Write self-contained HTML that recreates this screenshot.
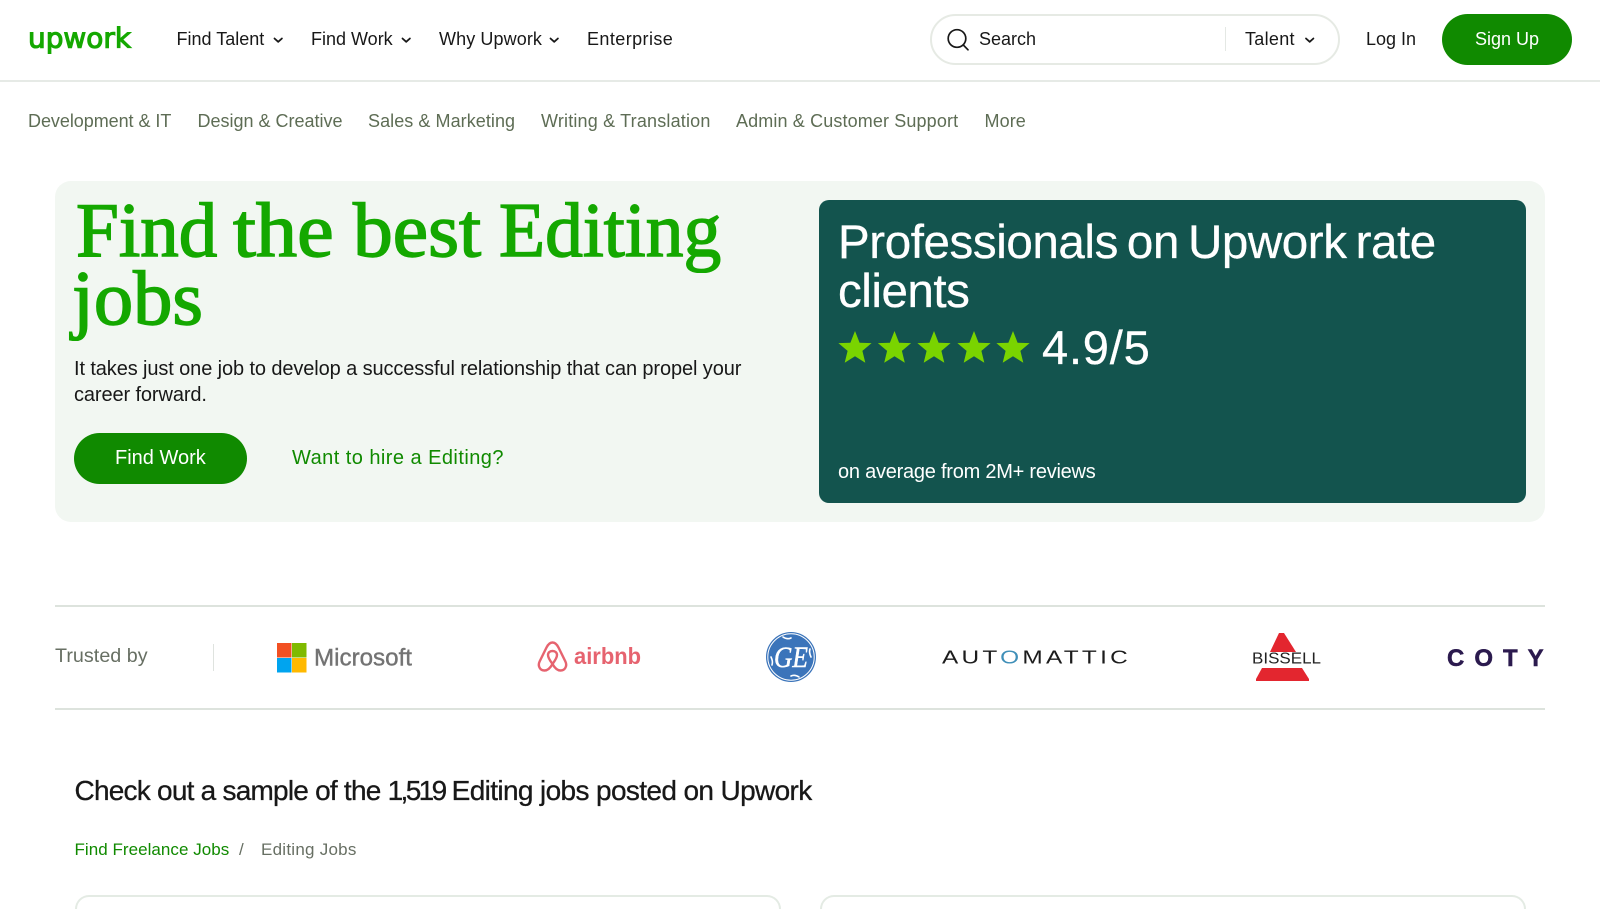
<!DOCTYPE html>
<html lang="en">
<head>
<meta charset="utf-8">
<title>Find the best Editing jobs - Upwork</title>
<style>
html,body{margin:0;padding:0;background:#fff;width:1600px;height:909px;overflow:hidden;}
#p{position:relative;width:1600px;height:909px;overflow:hidden;font-family:"Liberation Sans",sans-serif;color:#181818;background:#fff;}
.t{position:absolute;white-space:nowrap;line-height:1.117;}
.b{position:absolute;box-sizing:border-box;}
.nav{font-size:18px;top:29px;}
.sub{font-size:18px;top:111px;color:#5e6d55;}
.h{position:absolute;white-space:nowrap;line-height:1.117;top:187px;font-family:"Liberation Serif",serif;font-size:77px;color:#14a800;-webkit-text-stroke:1.5px #14a800;transform-origin:0 50%;}
</style>
</head>
<body>
<div id="p">
<div class="b" style="left:0;top:80px;width:1600px;height:1.5px;background:#e6eae6"></div>

<span class="t nav" style="left:176.5px">Find Talent</span>
<span class="t nav" style="left:311px">Find Work</span>
<span class="t nav" style="left:439px;letter-spacing:.1px">Why Upwork</span>
<span class="t nav" style="left:587px;letter-spacing:.42px">Enterprise</span>

<div class="b" style="left:930px;top:14px;width:410px;height:51px;border:2px solid #e6eae4;border-radius:26px;background:#fff"></div>
<div class="b" style="left:1225px;top:27px;width:1px;height:24px;background:#e4e8e4"></div>
<span class="t nav" style="left:979px">Search</span>
<span class="t nav" style="left:1245px;letter-spacing:.3px">Talent</span>
<span class="t nav" style="left:1366px">Log In</span>
<div class="b" style="left:1442px;top:14px;width:130px;height:51px;border-radius:26px;background:#108a00"></div>
<span class="t nav" style="left:1475px;color:#fff">Sign Up</span>

<span class="t sub" style="left:28px;letter-spacing:-.05px">Development &amp; IT</span>
<span class="t sub" style="left:197.5px">Design &amp; Creative</span>
<span class="t sub" style="left:368px;letter-spacing:.06px">Sales &amp; Marketing</span>
<span class="t sub" style="left:541px;letter-spacing:.18px">Writing &amp; Translation</span>
<span class="t sub" style="left:736px;letter-spacing:.13px">Admin &amp; Customer Support</span>
<span class="t sub" style="left:984.5px;letter-spacing:.1px">More</span>

<div class="b" style="left:55px;top:181px;width:1490px;height:341px;border-radius:16px;background:#f2f7f2"></div>
<span class="h" style="left:76px">Find</span>
<span class="h" style="left:233.4px;transform:scaleX(1.07)">the</span>
<span class="h" style="left:352.9px;transform:scaleX(1.033)">best</span>
<span class="h" style="left:499.3px;transform:scaleX(.98)">Editing</span>
<span class="h" style="left:71.5px;top:255px;transform:scaleX(1.02)">jobs</span>
<span class="t" style="left:74px;top:358px;font-size:20px;letter-spacing:-.11px">It takes just one job to develop a successful relationship that can propel your</span>
<span class="t" style="left:74px;top:384px;font-size:20px;letter-spacing:-.11px">career forward.</span>
<div class="b" style="left:74px;top:433px;width:173px;height:51px;border-radius:26px;background:#108a00"></div>
<span class="t" style="left:115px;top:447px;font-size:20px;color:#fff">Find Work</span>
<span class="t" style="left:292px;top:447px;font-size:20px;letter-spacing:.45px;color:#108a00">Want to hire a Editing?</span>

<div class="b" style="left:819px;top:200px;width:707px;height:303px;border-radius:10px;background:#13544e"></div>
<span class="t" style="left:838px;top:215.5px;font-size:47.5px;letter-spacing:-.4px;word-spacing:-3.8px;color:#fff;-webkit-text-stroke:.3px #fff">Professionals on Upwork rate</span>
<span class="t" style="left:838px;top:264.5px;font-size:47.5px;letter-spacing:-.47px;color:#fff;-webkit-text-stroke:.3px #fff">clients</span>
<span class="t" style="left:1042px;top:321.5px;font-size:47px;letter-spacing:.8px;color:#fff;-webkit-text-stroke:.3px #fff">4.9/5</span>
<span class="t" style="left:838px;top:461px;font-size:20px;letter-spacing:-.24px;color:#fff">on average from 2M+ reviews</span>

<div class="b" style="left:55px;top:605px;width:1490px;height:1.5px;background:#dde3dd"></div>
<div class="b" style="left:55px;top:708px;width:1490px;height:1.5px;background:#dde3dd"></div>
<span class="t" style="left:55px;top:645px;font-size:19.7px;letter-spacing:.04px;color:#676f63">Trusted by</span>
<div class="b" style="left:212.5px;top:644px;width:1px;height:27px;background:#dfe3df"></div>

<span class="t" style="left:74.5px;top:774.7px;font-size:28px;letter-spacing:-.77px;-webkit-text-stroke:.3px #181818">Check out a sample of the <span style="letter-spacing:-2.6px">1,519</span> <span style="letter-spacing:-.63px">Editing jobs posted on Upwork</span></span>
<span class="t" style="left:74.5px;top:839.6px;font-size:17px;letter-spacing:.04px;color:#108a00">Find Freelance Jobs</span>
<span class="t" style="left:239px;top:839.6px;font-size:17px;color:#676f63">/</span>
<span class="t" style="left:261px;top:839.6px;font-size:17px;letter-spacing:.25px;color:#676f63">Editing Jobs</span>

<div class="b" style="left:75px;top:895px;width:706px;height:14px;border:2px solid #e4ebe4;border-bottom:0;border-radius:18px 18px 0 0"></div>
<div class="b" style="left:820px;top:895px;width:706px;height:14px;border:2px solid #e4ebe4;border-bottom:0;border-radius:18px 18px 0 0"></div>

<svg width="1600" height="909" viewBox="0 0 1600 909" style="position:absolute;left:0;top:0;display:block" xmlns="http://www.w3.org/2000/svg">
  <defs>
    <clipPath id="c"><rect x="1400" y="630" width="145" height="60"/></clipPath>
  </defs>
  <!-- Logo -->
  <text x="28" y="47.5" font-family="'DejaVu Sans',sans-serif" font-size="27.5" fill="#14a800" stroke="#14a800" stroke-width="1.1" textLength="103" lengthAdjust="spacingAndGlyphs">upwork</text>

  <!-- Chevrons -->
  <g fill="none" stroke="#181818" stroke-width="1.8" stroke-linecap="round" stroke-linejoin="round">
    <path d="M274.5 38.5l3.7 3.3 3.7-3.3"/>
    <path d="M402.5 38.5l3.7 3.3 3.7-3.3"/>
    <path d="M550.5 38.5l3.7 3.3 3.7-3.3"/>
    <path d="M1306 38.5l3.7 3.3 3.7-3.3"/>
  </g>
  <!-- Search icon -->
  <g fill="none" stroke="#181818" stroke-width="1.7" stroke-linecap="round">
    <circle cx="957" cy="38.5" r="8.8"/>
    <path d="M963.3 45l4.7 4.8"/>
  </g>

  <!-- Stars -->
  <g fill="#7ad400">
    <polygon transform="translate(855 348.5)" points="0,-17.5 4.6,-5.8 16.6,-5.4 7.4,2.4 10.3,14.2 0,7.8 -10.3,14.2 -7.4,2.4 -16.6,-5.4 -4.6,-5.8"/>
    <polygon transform="translate(894.5 348.5)" points="0,-17.5 4.6,-5.8 16.6,-5.4 7.4,2.4 10.3,14.2 0,7.8 -10.3,14.2 -7.4,2.4 -16.6,-5.4 -4.6,-5.8"/>
    <polygon transform="translate(934 348.5)" points="0,-17.5 4.6,-5.8 16.6,-5.4 7.4,2.4 10.3,14.2 0,7.8 -10.3,14.2 -7.4,2.4 -16.6,-5.4 -4.6,-5.8"/>
    <polygon transform="translate(974 348.5)" points="0,-17.5 4.6,-5.8 16.6,-5.4 7.4,2.4 10.3,14.2 0,7.8 -10.3,14.2 -7.4,2.4 -16.6,-5.4 -4.6,-5.8"/>
    <polygon transform="translate(1013 348.5)" points="0,-17.5 4.6,-5.8 16.6,-5.4 7.4,2.4 10.3,14.2 0,7.8 -10.3,14.2 -7.4,2.4 -16.6,-5.4 -4.6,-5.8"/>
  </g>

  <!-- Microsoft -->
  <rect x="277" y="643" width="14.5" height="14.5" fill="#f25022"/>
  <rect x="292" y="643" width="14.5" height="14.5" fill="#7fba00"/>
  <rect x="277" y="658" width="14.5" height="14.5" fill="#00a4ef"/>
  <rect x="292" y="658" width="14.5" height="14.5" fill="#ffb900"/>
  <text x="314" y="665.5" font-family="'Liberation Sans',sans-serif" font-size="24" fill="#737373" stroke="#737373" stroke-width=".4" textLength="98" lengthAdjust="spacingAndGlyphs">Microsoft</text>

  <!-- Airbnb -->
  <g transform="translate(537 641)" fill="none" stroke="#e6636f" stroke-width="2.4" stroke-linejoin="round">
    <path d="M15.5 1.5C12.5 1.5 11 3.5 9.5 6.5L2.6 20.5C.5 25 3 29.5 7.5 29.5 10.5 29.5 13 27.5 15.5 23 18 27.5 20.5 29.5 23.5 29.5 28 29.5 30.5 25 28.4 20.5L21.5 6.5C20 3.5 18.5 1.5 15.5 1.5Z"/>
    <path d="M15.5 23C12.5 19 11 16 11 14 11 11.5 13 10 15.5 10 18 10 20 11.5 20 14 20 16 18.5 19 15.5 23Z"/>
  </g>
  <text x="574" y="664" font-family="'Liberation Sans',sans-serif" font-weight="700" font-size="23" fill="#e6636f" textLength="67" lengthAdjust="spacingAndGlyphs">airbnb</text>

  <!-- GE -->
  <circle cx="791" cy="657" r="25" fill="#3b74ba"/>
  <circle cx="791" cy="657" r="23.2" fill="none" stroke="#fff" stroke-width="1"/>
  <circle cx="791" cy="657" r="21.5" fill="#3b74ba"/>
  <g fill="none" stroke="#fff" stroke-width="1.6" stroke-linecap="round">
    <path d="M783 637c3 2 6 2 8 1"/>
    <path d="M810 649c-1 3 0 6 1 8"/>
    <path d="M799 677c-3-2-6-2-8-1"/>
    <path d="M772 665c1-3 0-6-1-8"/>
  </g>
  <text x="774" y="667" font-family="'Liberation Serif',serif" font-style="italic" font-size="30" fill="#fff" stroke="#fff" stroke-width=".5" textLength="34" lengthAdjust="spacingAndGlyphs">GE</text>

  <!-- Automattic -->
  <text x="942" y="663.5" font-family="'Liberation Sans',sans-serif" font-size="18" fill="#1c1c1c" letter-spacing="2.4" textLength="189" lengthAdjust="spacingAndGlyphs">AUT<tspan fill="#3f8fb8">O</tspan>MATTIC</text>

  <!-- Bissell -->
  <polygon points="1279,633 1284,633 1296,652 1270,652" fill="#e3262f"/>
  <polygon points="1262,668 1302,668 1309,679 1309,681 1256,681 1256,679" fill="#e3262f"/>
  <text x="1252" y="663.5" font-family="'Liberation Sans',sans-serif" font-size="16" fill="#222" textLength="69" lengthAdjust="spacingAndGlyphs">BISSELL</text>

  <!-- Coty -->
  <g clip-path="url(#c)">
    <text x="1447" y="666" font-family="'Liberation Sans',sans-serif" font-weight="700" font-size="24" fill="#2b1a4e" stroke="#2b1a4e" stroke-width=".5" letter-spacing="10">COTY</text>
  </g>
</svg>
</div>
</body>
</html>
